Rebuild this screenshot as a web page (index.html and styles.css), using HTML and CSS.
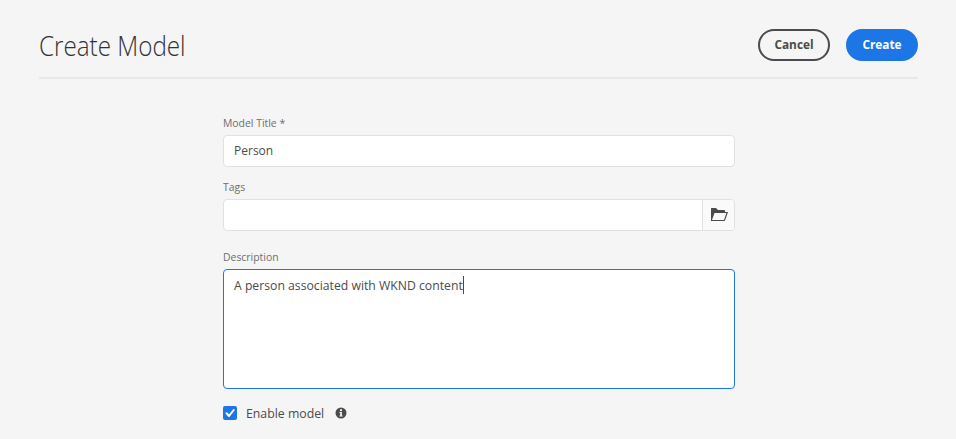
FILE: index.html
```html
<!DOCTYPE html>
<html lang="en">
<head>
<meta charset="utf-8">
<title>Create Model</title>
<link rel="stylesheet" href="styles.css">
</head>
<body>
<header class="header">
  <h1 class="title">Create Model</h1>
  <div class="actions">
    <button class="button" type="button"><span class="button-text">Cancel</span></button>
    <button class="button button-primary" type="button"><span class="button-text">Create</span></button>
  </div>
</header>
<main class="form">
  <div class="label label-title">Model Title *</div>
  <div class="field"><div class="value value-short">Person</div></div>
  <div class="label label-tags">Tags</div>
  <div class="picker">
    <div class="picker-input"></div>
    <button class="picker-button" type="button" aria-label="Browse">
      <svg width="18" height="16" viewBox="0 0 18 16"><path fill="#4b4b4b" fill-rule="evenodd" d="M1.500 1H6l2 2h6.500a.5.500 0 0 1 .5.500V5h2.300a.5.500 0 0 1 .5.700L15 13.600a.6.600 0 0 1-.6.400H1.500a.5.500 0 0 1-.5-.5v-12a.5.500 0 0 1 .5-.5zM4.500 6 2 13h12l2.400-7z"/></svg>
    </button>
  </div>
  <div class="label label-description">Description</div>
  <div class="textarea"><div class="value">A person associated with WKND content<span class="caret"></span></div></div>
  <div class="check-row">
    <span class="checkbox"><svg width="14" height="14" viewBox="0 0 14 14"><path fill="none" stroke="#fff" stroke-width="2" stroke-linecap="round" stroke-linejoin="round" d="M3.500 7.300 6 10l4.700-6"/></svg></span>
    <span class="check-label">Enable model</span>
    <svg class="info" width="12" height="12" viewBox="0 0 12 12"><circle cx="6" cy="6" r="5.500" fill="#4b4b4b"/><circle cx="6" cy="3.200" r="1.100" fill="#f5f5f5"/><path fill="#f5f5f5" d="M4.500 5h2.400v3.400h.7v1H4.500v-1h.7V6h-.7z"/></svg>
  </div>
</main>
</body>
</html>
```
FILE: styles.css
```css
* { box-sizing: border-box; }
body {
  margin: 0;
  height: 439px;
  overflow: hidden;
  background: #f5f5f5;
  color: #4b4b4b;
  font-family: "Open Sans", "Noto Sans", sans-serif;
  font-size: 13.5px;
}
.header {
  display: flex;
  justify-content: space-between;
  align-items: flex-start;
  height: 79px;
  margin: 0 38px 0 39px;
  padding-top: 29px;
  border-bottom: 2px solid #e8e8e8;
}
.title {
  margin: -1px 0 0 -0.5px;
  color: #323232;
  font-size: 28px;
  line-height: 34px;
  font-weight: 325;
  transform: scaleX(0.865);
  transform-origin: left;
}
.actions { display: flex; gap: 16px; }
.button {
  width: 72px;
  height: 32px;
  padding: 0 0 2px;
  border: 2px solid #4b4b4b;
  border-radius: 16px;
  background: transparent;
  color: #4b4b4b;
  font: 700 13px "Open Sans", sans-serif;
}
.button-text { display: block; transform: scaleX(0.91); }
.button-primary {
  border-color: #1d76e5;
  background: #1d76e5;
  color: #fff;
}
.form { width: 512px; margin: 36px 0 0 223px; }
.label {
  height: 20px;
  margin-left: -0.5px;
  color: #6e6e6e;
  font-size: 11.5px;
  font-weight: 475;
  line-height: 16px;
  transform: scaleX(0.905);
  transform-origin: left;
}
.label-tags { margin-top: 12px; }
.label-description { margin-top: 18px; }
.field, .textarea {
  border: 1px solid #e1e1e1;
  border-radius: 4px;
  background: #fff;
  padding: 0 10px;
}
.field { height: 32px; }
.value {
  width: max-content;
  height: 30px;
  font-weight: 475;
  line-height: 30px;
  transform: scaleX(0.905);
  transform-origin: left;
}
.value-short { margin-top: -1px; transform: scaleX(0.89); }
.picker {
  display: flex;
  height: 32px;
  border: 1px solid #e1e1e1;
  border-radius: 4px;
  background: #fff;
  overflow: hidden;
}
.picker-input { flex: 1; }
.picker-button {
  display: flex;
  align-items: center;
  justify-content: center;
  width: 32px;
  padding: 0;
  border: 0;
  border-left: 1px solid #e1e1e1;
  background: #fafafa;
}
.textarea {
  height: 120px;
  border-color: #1d76e5;
}
.caret {
  display: inline-block;
  width: 1px;
  height: 18px;
  vertical-align: -4px;
  background: #323232;
}
.check-row { display: flex; align-items: center; height: 20px; margin-top: 14px; }
.checkbox { display: flex; width: 14px; height: 14px; border-radius: 2px; background: #1d76e5; }
.check-label {
  width: 79px;
  margin-left: 9px;
  font-weight: 475;
  line-height: 20px;
  white-space: nowrap;
  transform: scaleX(0.91);
  transform-origin: 0 50%;
}
.info { margin-left: 10px; }
```
